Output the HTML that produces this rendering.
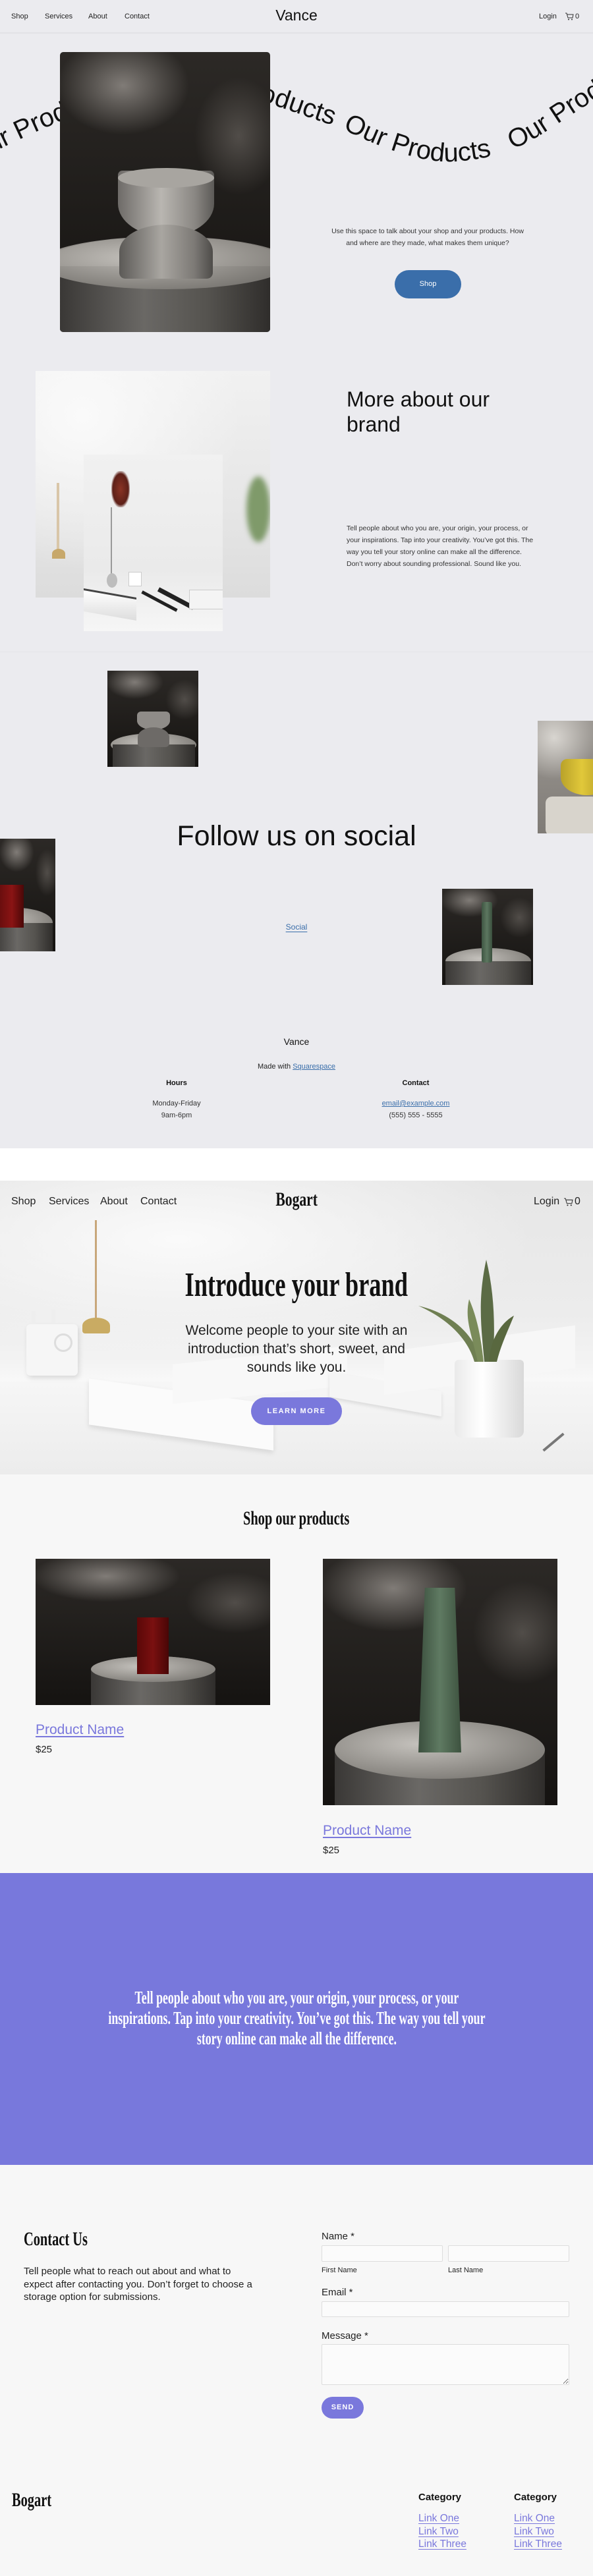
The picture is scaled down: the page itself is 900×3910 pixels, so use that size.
<!DOCTYPE html>
<html><head><meta charset="utf-8"><style>
*{margin:0;padding:0;box-sizing:border-box}
body{width:900px;height:3910px;position:relative;background:#fff;font-family:"Liberation Sans",sans-serif;overflow:hidden}
.a{position:absolute}
.vance{position:absolute;left:0;top:0;width:900px;height:1743px;background:#ebebef}
.nav{font-size:11px;color:#222;top:19px}
.bog{position:absolute;left:0;top:1792px;width:900px;height:2118px;background:#f7f7f7}
.serif{font-family:"Liberation Serif",serif;font-weight:bold;display:inline-block;transform-origin:center;white-space:nowrap}
.narrow{font-family:"Liberation Sans Narrow","Liberation Sans",sans-serif}
.dark{background:radial-gradient(ellipse 45% 25% at 30% 12%,rgba(150,145,140,.8),transparent 70%),radial-gradient(ellipse 30% 30% at 85% 30%,rgba(110,105,100,.6),transparent 70%),linear-gradient(#2c2926,#151311);overflow:hidden}
.ped{position:absolute;background:linear-gradient(90deg,#3a3836,#6a6865 40%,#55534f 70%,#2f2d2b)}
.pedtop{position:absolute;border-radius:50%;background:radial-gradient(ellipse at 40% 40%,#c4c1bc,#8e8b86 60%,#6a6864)}
.lnk{color:#7a78dc;text-decoration:underline;text-underline-offset:3px}
input,textarea{position:absolute;background:#fbfbfb;border:1px solid #ddd;border-radius:2px}
.lbl{position:absolute;font-size:15px;color:#222}
</style></head><body>

<div class="vance">
  <div class="a nav" style="left:17px">Shop</div>
  <div class="a nav" style="left:68px">Services</div>
  <div class="a nav" style="left:134px">About</div>
  <div class="a nav" style="left:189px">Contact</div>
  <div class="a" style="left:0;width:900px;text-align:center;top:10px;font-size:23px;color:#111">Vance</div>
  <div class="a nav" style="left:818px">Login</div>
  <svg class="a" style="left:857px;top:18px" width="14" height="14" viewBox="0 0 14 14"><path d="M1 2h2l2 7h7l1-5H4" fill="none" stroke="#333" stroke-width="1"/><circle cx="6" cy="11.5" r="1" fill="#333"/><circle cx="11" cy="11.5" r="1" fill="#333"/></svg>
  <div class="a nav" style="left:873px">0</div>
  <div class="a" style="left:0;top:49px;width:900px;height:2px;background:#e2e2e6"></div>

  <svg class="a" style="left:0;top:0" width="900" height="520">
    <defs>
      <path id="wA" d="M-42 245 C -10 232, 40 205, 90 185 S 200 130, 300 135"/>
      <path id="wB" d="M300 139 C 380 140, 440 170, 505 190"/>
      <path id="wC" d="M520 196 C 580 225, 640 248, 690 245 C 740 242, 780 230, 820 205 C 860 180, 900 150, 960 120"/>
    </defs>
    <text font-family="Liberation Sans,sans-serif" font-size="40" fill="#111"><textPath href="#wA">Our Products</textPath></text>
    <text font-family="Liberation Sans,sans-serif" font-size="40" fill="#111" text-anchor="end"><textPath href="#wB" startOffset="100%">Products</textPath></text>
    <text font-family="Liberation Sans,sans-serif" font-size="40" fill="#111" xml:space="preserve"><textPath href="#wC">Our Products   Our Products</textPath></text>
  </svg>

  <div class="a dark" style="left:91px;top:79px;width:319px;height:425px;border-radius:5px">
    <div class="pedtop" style="left:-30px;top:280px;width:380px;height:90px"></div>
    <div class="ped" style="left:0;top:325px;width:319px;height:100px"></div>
    <div class="pedtop" style="left:-30px;top:280px;width:380px;height:80px;opacity:.9"></div>
    <div class="a" style="left:88px;top:180px;width:146px;height:100px;border-radius:8px 8px 60% 60%;background:linear-gradient(90deg,#6e6b68,#b9b6b1 45%,#8a8783 80%,#5c5a57)"></div>
    <div class="a" style="left:88px;top:176px;width:146px;height:30px;border-radius:50%;background:#a8a5a0"></div>
    <div class="a" style="left:90px;top:262px;width:142px;height:82px;border-radius:55% 55% 10px 10px;background:linear-gradient(90deg,#5c5a57,#a9a6a1 45%,#7d7a76 80%,#4e4c49)"></div>
  </div>

  <div class="a" style="left:494px;top:342px;width:310px;text-align:center;font-size:10.5px;line-height:18px;color:#333">Use this space to talk about your shop and your products. How and where are they made, what makes them unique?</div>
  <div class="a" style="left:599px;top:410px;width:101px;height:43px;border-radius:22px;background:#3a6eaa;color:#fff;font-size:11px;text-align:center;line-height:43px">Shop</div>

  <div class="a" style="left:54px;top:563px;width:356px;height:344px;background:radial-gradient(ellipse at 20% 20%,#fafafa,transparent 60%),linear-gradient(180deg,#f1f1f1,#e6e6e6 60%,#dcdcdc);overflow:hidden">
    <div class="a" style="left:32px;top:170px;width:4px;height:110px;background:#d9c6a8"></div>
    <div class="a" style="left:25px;top:270px;width:20px;height:15px;border-radius:50% 50% 0 0;background:#c7a86b"></div>
    <div class="a" style="left:320px;top:160px;width:36px;height:100px;border-radius:50%;background:#7f9a6a;filter:blur(4px)"></div>
  </div>
  <div class="a" style="left:127px;top:690px;width:211px;height:268px;background:linear-gradient(180deg,#f1f1f1,#eaeaea 65%,#f6f6f6);overflow:hidden">
    <div class="a" style="left:42px;top:25px;width:28px;height:55px;border-radius:40%;background:radial-gradient(#8a3324,#5d2018 60%,transparent 75%)"></div>
    <div class="a" style="left:41px;top:80px;width:2px;height:105px;background:#999"></div>
    <div class="a" style="left:35px;top:180px;width:16px;height:22px;border-radius:50%;background:#bdbdbd"></div>
    <div class="a" style="left:68px;top:178px;width:20px;height:22px;background:#fff;border:1px solid #ccc"></div>
    <div class="a" style="left:0;top:210px;width:80px;height:35px;background:linear-gradient(170deg,#fff,#ddd);border-top:3px solid #444;transform:skewY(10deg)"></div>
    <div class="a" style="left:85px;top:220px;width:60px;height:5px;background:#222;transform:rotate(28deg)"></div>
    <div class="a" style="left:110px;top:215px;width:60px;height:7px;background:#222;transform:rotate(28deg)"></div>
    <div class="a" style="left:160px;top:205px;width:55px;height:30px;background:#f4f4f4;border:1px solid #ccc"></div>
  </div>

  <div class="a" style="left:526px;top:587px;font-size:32px;line-height:38px;color:#111">More about our<br>brand</div>
  <div class="a" style="left:526px;top:793px;width:285px;font-size:10.5px;line-height:18px;color:#333">Tell people about who you are, your origin, your process, or your inspirations. Tap into your creativity. You’ve got this. The way you tell your story online can make all the difference. Don’t worry about sounding professional. Sound like you.</div>

  <div class="a" style="left:0;top:989px;width:900px;height:1px;background:#e4e4e8"></div>
  <div class="a dark" style="left:163px;top:1018px;width:138px;height:146px">
    <div class="pedtop" style="left:5px;top:95px;width:130px;height:35px"></div>
    <div class="ped" style="left:8px;top:112px;width:125px;height:40px"></div>
    <div class="a" style="left:45px;top:62px;width:50px;height:28px;border-radius:6px 6px 50% 50%;background:#8f8c88"></div>
    <div class="a" style="left:46px;top:86px;width:48px;height:30px;border-radius:50% 50% 6px 6px;background:#6d6a67"></div>
  </div>
  <div class="a" style="left:816px;top:1094px;width:84px;height:171px;background:radial-gradient(circle at 30% 15%,#d8d5d0,transparent 40%),linear-gradient(#9c9893,#7f7b76);overflow:hidden">
    <div class="a" style="left:35px;top:58px;width:80px;height:55px;border-radius:10px 10px 50% 50%;background:linear-gradient(90deg,#b9a22a,#e1c83a 40%,#a48c1e)"></div>
    <div class="a" style="left:12px;top:115px;width:80px;height:60px;border-radius:10px;background:#d8d4cc"></div>
  </div>

  <div class="a" style="left:0;top:1245px;width:900px;text-align:center;font-size:43px;color:#111">Follow us on social</div>

  <div class="a dark" style="left:0;top:1273px;width:84px;height:171px">
    <div class="pedtop" style="left:-30px;top:105px;width:110px;height:45px"></div>
    <div class="ped" style="left:-10px;top:128px;width:90px;height:50px"></div>
    <div class="a" style="left:0;top:70px;width:36px;height:65px;background:linear-gradient(90deg,#6a0e0e,#8a1414,#4a0808)"></div>
  </div>
  <div class="a" style="left:0;width:900px;text-align:center;top:1400px;font-size:12px;color:#3a6eaa"><span style="text-decoration:underline;text-underline-offset:3px">Social</span></div>
  <div class="a dark" style="left:671px;top:1349px;width:138px;height:146px">
    <div class="pedtop" style="left:5px;top:90px;width:130px;height:40px"></div>
    <div class="ped" style="left:5px;top:110px;width:130px;height:40px"></div>
    <div class="a" style="left:60px;top:20px;width:16px;height:92px;border-radius:3px;background:linear-gradient(90deg,#3e5542,#5d7760,#3a4f3d)"></div>
  </div>

  <div class="a" style="left:0;width:900px;text-align:center;top:1573px;font-size:14px;color:#111">Vance</div>
  <div class="a" style="left:0;width:900px;text-align:center;top:1613px;font-size:11px;color:#222">Made with <span style="color:#3a6eaa;text-decoration:underline">Squarespace</span></div>
  <div class="a" style="left:168px;width:200px;text-align:center;top:1638px;font-size:11px;font-weight:bold;color:#111">Hours</div>
  <div class="a" style="left:531px;width:200px;text-align:center;top:1638px;font-size:11px;font-weight:bold;color:#111">Contact</div>
  <div class="a" style="left:168px;width:200px;text-align:center;top:1666px;font-size:11px;line-height:18px;color:#333">Monday-Friday<br>9am-6pm</div>
  <div class="a" style="left:531px;width:200px;text-align:center;top:1666px;font-size:11px;line-height:18px;color:#333"><span style="color:#3a6eaa;text-decoration:underline">email@example.com</span><br>(555) 555 - 5555</div>
</div>

<div class="bog">
  <div class="a" style="left:0;top:0;width:900px;height:446px;background:radial-gradient(ellipse 60% 40% at 30% 20%,#fafafa,transparent),linear-gradient(180deg,#e6e6e6 0%,#ececec 45%,#f3f3f3 62%,#fafafa 70%,#f0f0f0 100%);overflow:hidden">
    <div class="a" style="left:0;top:305px;width:900px;height:141px;background:linear-gradient(#f6f6f6,#ececec)"></div>
    <div class="a" style="left:144px;top:60px;width:3px;height:158px;background:#c8a77a"></div>
    <div class="a" style="left:125px;top:208px;width:42px;height:24px;border-radius:50% 50% 4px 4px;background:#c9ab63"></div>
    <div class="a" style="left:40px;top:218px;width:78px;height:78px;background:#f6f6f6;border-radius:6px;box-shadow:2px 4px 8px rgba(0,0,0,.12)"></div>
    <div class="a" style="left:48px;top:198px;width:6px;height:20px;background:#eee"></div>
    <div class="a" style="left:78px;top:196px;width:6px;height:20px;background:#eee"></div>
    <div class="a" style="left:82px;top:232px;width:28px;height:28px;border-radius:50%;border:3px solid #ddd"></div>
    <div class="a" style="left:135px;top:320px;width:280px;height:70px;background:#fbfbfb;transform:skewY(8deg);box-shadow:0 4px 8px rgba(0,0,0,.1)"></div>
    <div class="a" style="left:262px;top:265px;width:265px;height:60px;background:#f8f8f8;transform:skewY(-6deg)"></div>
    <div class="a" style="left:500px;top:305px;width:170px;height:38px;background:#f5f5f5;transform:skewY(10deg);box-shadow:0 3px 6px rgba(0,0,0,.1)"></div>
    <div class="a" style="left:583px;top:240px;width:290px;height:65px;background:#f7f7f7;transform:skewY(-8deg)"></div>
    <div class="a" style="left:690px;top:272px;width:105px;height:118px;border-radius:6px 6px 10px 10px;background:linear-gradient(90deg,#eaeaea,#fff 40%,#d9d9d9)"></div>
    <svg class="a" style="left:630px;top:120px" width="160" height="160" viewBox="0 0 160 160">
      <path d="M105 155 C100 100,95 60,108 0 C120 50,122 100,118 155Z" fill="#5b6b45"/>
      <path d="M90 155 C80 120,50 90,5 70 C50 80,90 110,100 155Z" fill="#6f7f52"/>
      <path d="M112 155 C115 110,140 90,150 85 C140 110,130 130,124 155Z" fill="#59683f"/>
      <path d="M95 155 C85 110,75 90,82 60 C95 90,100 120,104 155Z" fill="#7a8b5a"/>
    </svg>
    <div class="a" style="left:820px;top:395px;width:40px;height:4px;background:#777;transform:rotate(-40deg)"></div>
  </div>
  <div class="a narrow" style="left:17px;top:23px;font-size:16px;color:#222">Shop</div>
  <div class="a narrow" style="left:74px;top:23px;font-size:16px;color:#222">Services</div>
  <div class="a narrow" style="left:152px;top:23px;font-size:16px;color:#222">About</div>
  <div class="a narrow" style="left:213px;top:23px;font-size:16px;color:#222">Contact</div>
  <div class="a" style="left:0;width:900px;text-align:center;top:12px"><span class="serif" style="font-size:30px;transform:scaleX(.72);color:#111">Bogart</span></div>
  <div class="a narrow" style="left:810px;top:23px;font-size:16px;color:#222">Login</div>
  <svg class="a" style="left:855px;top:25px" width="15" height="15" viewBox="0 0 14 14"><path d="M1 2h2l2 7h7l1-5H4" fill="none" stroke="#333" stroke-width="1"/><circle cx="6" cy="11.5" r="1" fill="#333"/><circle cx="11" cy="11.5" r="1" fill="#333"/></svg>
  <div class="a narrow" style="left:872px;top:23px;font-size:16px;color:#222">0</div>

  <div class="a" style="left:0;width:900px;text-align:center;top:129px"><span class="serif" style="font-size:52px;transform:scaleX(.7);color:#111">Introduce your brand</span></div>
  <div class="a narrow" style="left:270px;width:360px;text-align:center;top:214px;font-size:21px;line-height:28px;color:#222">Welcome people to your site with an introduction that’s short, sweet, and sounds like you.</div>
  <div class="a" style="left:381px;top:329px;width:138px;height:42px;border-radius:21px;background:#7a78dc;color:#fff;font-size:11px;font-weight:bold;letter-spacing:1.5px;text-align:center;line-height:42px">LEARN MORE</div>

  <div class="a" style="left:0;width:900px;text-align:center;top:496px"><span class="serif" style="font-size:30px;transform:scaleX(.68);color:#111">Shop our products</span></div>
  <div class="a dark" style="left:54px;top:574px;width:356px;height:222px">
    <div class="pedtop" style="left:84px;top:148px;width:189px;height:40px"></div>
    <div class="ped" style="left:84px;top:168px;width:189px;height:60px"></div>
    <div class="pedtop" style="left:84px;top:148px;width:189px;height:39px"></div>
    <div class="a" style="left:154px;top:89px;width:48px;height:86px;background:linear-gradient(90deg,#5a0808,#7a1010 50%,#480606)"></div>
  </div>
  <div class="a narrow lnk" style="left:54px;top:822px;font-size:21px">Product Name</div>
  <div class="a narrow" style="left:54px;top:855px;font-size:15px;color:#222">$25</div>

  <div class="a dark" style="left:490px;top:574px;width:356px;height:374px">
    <div class="ped" style="left:18px;top:290px;width:319px;height:90px"></div>
    <div class="pedtop" style="left:18px;top:246px;width:319px;height:88px"></div>
    <div class="a" style="left:145px;top:44px;width:65px;height:250px;clip-path:polygon(15% 0,85% 0,100% 100%,0 100%);background:linear-gradient(90deg,#3b4f3e,#5f7a62 50%,#3d523f)"></div>
  </div>
  <div class="a narrow lnk" style="left:490px;top:975px;font-size:21px">Product Name</div>
  <div class="a narrow" style="left:490px;top:1008px;font-size:15px;color:#222">$25</div>

  <div class="a" style="left:0;top:1051px;width:900px;height:443px;background:#7878dc"></div>
  <div class="a" style="left:0;width:900px;text-align:center;top:1225px;color:#fff;font-family:'Liberation Serif',serif;font-weight:bold;font-size:27px;line-height:31px">
    <div style="display:inline-block;transform:scaleX(.66);white-space:nowrap">Tell people about who you are, your origin, your process, or your<br>inspirations. Tap into your creativity. You’ve got this. The way you tell your<br>story online can make all the difference.</div>
  </div>

  <div class="a" style="left:36px;top:1590px"><span class="serif" style="font-size:30px;transform:scaleX(.68);transform-origin:left;color:#111">Contact Us</span></div>
  <div class="a narrow" style="left:36px;top:1646px;width:360px;font-size:15px;line-height:19.5px;color:#222">Tell people what to reach out about and what to expect after contacting you. Don’t forget to choose a storage option for submissions.</div>

  <div class="lbl narrow" style="left:488px;top:1594px">Name *</div>
  <input style="left:488px;top:1616px;width:184px;height:25px">
  <input style="left:680px;top:1616px;width:184px;height:25px">
  <div class="lbl narrow" style="left:488px;top:1648px;font-size:11px">First Name</div>
  <div class="lbl narrow" style="left:680px;top:1648px;font-size:11px">Last Name</div>
  <div class="lbl narrow" style="left:488px;top:1679px">Email *</div>
  <input style="left:488px;top:1701px;width:376px;height:24px">
  <div class="lbl narrow" style="left:488px;top:1745px">Message *</div>
  <textarea style="left:488px;top:1766px;width:376px;height:62px"></textarea>
  <div class="a" style="left:488px;top:1846px;width:64px;height:33px;border-radius:17px;background:#7a78dc;color:#fff;font-size:11px;font-weight:bold;letter-spacing:1px;text-align:center;line-height:33px">SEND</div>

  <div class="a" style="left:18px;top:1986px"><span class="serif" style="font-size:30px;transform:scaleX(.68);transform-origin:left;color:#111">Bogart</span></div>
  <div class="a narrow" style="left:635px;top:1990px;font-size:15px;font-weight:bold;color:#111">Category</div>
  <div class="a narrow" style="left:780px;top:1990px;font-size:15px;font-weight:bold;color:#111">Category</div>
  <div class="a narrow" style="left:635px;top:2021px;font-size:15.5px;line-height:19.5px"><span class="lnk">Link One</span><br><span class="lnk">Link Two</span><br><span class="lnk">Link Three</span></div>
  <div class="a narrow" style="left:780px;top:2021px;font-size:15.5px;line-height:19.5px"><span class="lnk">Link One</span><br><span class="lnk">Link Two</span><br><span class="lnk">Link Three</span></div>
</div>
</body></html>
